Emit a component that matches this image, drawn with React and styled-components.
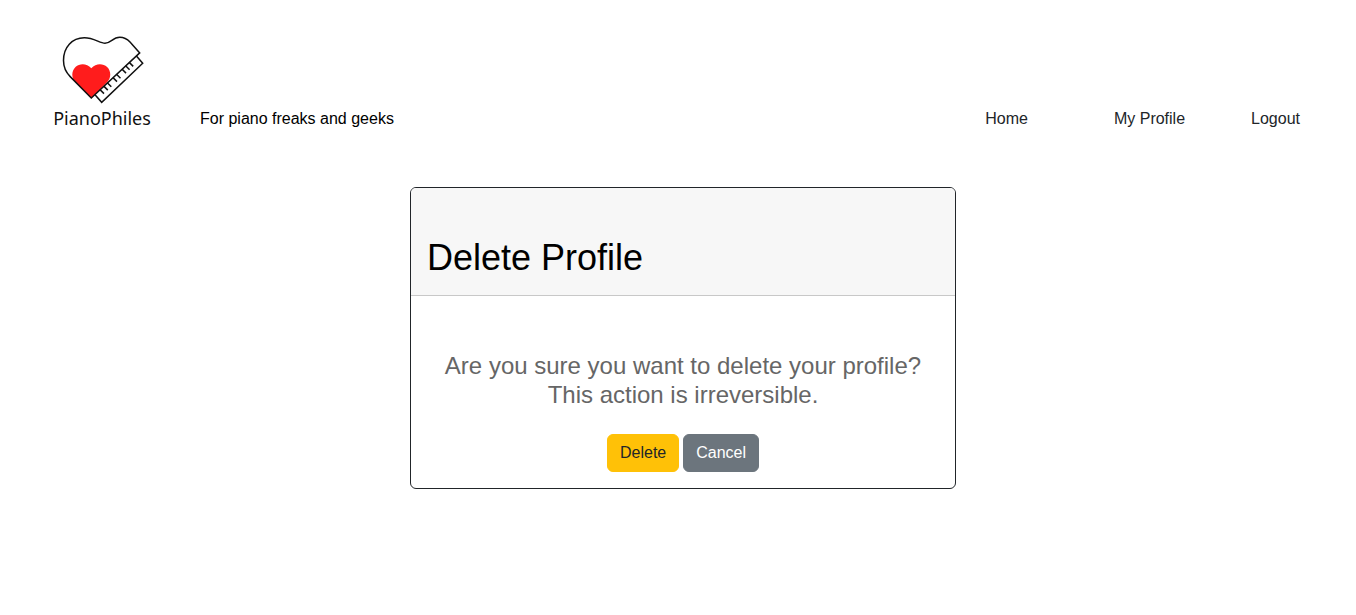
import React from "react";
import styled, { createGlobalStyle } from "styled-components";

const GlobalStyle = createGlobalStyle`
  *, *::before, *::after { box-sizing: border-box; }
  body {
    margin: 0;
    background: #fff;
    color: #212529;
    font: 16px/24px "Liberation Sans", Arial, sans-serif;
  }
  h1, p { margin: 0; font-weight: 400; }
`;

const Header = styled.header`
  display: flex;
  align-items: flex-end;
  padding: 30px 56px 0 53px;
`;

const Brand = styled.a`
  display: flex;
  flex-direction: column;
  align-items: center;
  width: 98px;
  color: #111;
  font: 18px/26px "Noto Sans", sans-serif;
  text-decoration: none;
`;

const Logo = styled.svg`
  display: block;
  width: 98px;
  height: 75px;
`;

const Tagline = styled.p`
  margin-left: 49px;
  color: #000;
`;

const Nav = styled.nav`
  display: flex;
  margin-left: auto;
`;

const NavLink = styled.a`
  margin-left: ${({ $gap }) => $gap}px;
  color: #212529;
  text-decoration: none;
`;

const Main = styled.main`
  display: flex;
  justify-content: center;
  padding: 56px 0 24px 10px;
`;

const Card = styled.section`
  width: 100%;
  max-width: 546px;
  border: 1px solid #212529;
  border-radius: 6px;
  overflow: hidden;
`;

const CardHeader = styled.div`
  padding: 48px 16px 16px;
  border-bottom: 1px solid #c8c8c8;
  background: #f7f7f7;
`;

const Title = styled.h1`
  color: #000;
  font-size: 36px;
  line-height: 43px;
`;

const CardBody = styled.div`
  padding: 55px 16px 16px;
  text-align: center;
`;

const Message = styled.p`
  margin-bottom: 25px;
  color: #666;
  font-size: 24px;
  line-height: 29px;
`;

const Actions = styled.div`
  display: flex;
  justify-content: center;
  gap: 4px;
`;

const Button = styled.button`
  padding: 6px 12px;
  border: 1px solid ${({ $fill }) => $fill};
  border-radius: 6px;
  background: ${({ $fill }) => $fill};
  color: ${({ $ink }) => $ink};
  font: inherit;
  cursor: pointer;
`;

const keys = [
  [100, 89.6], [103.8, 86.1], [107.3, 82.8], [113, 77.6],
  [116.5, 74.3], [122, 69.1], [125.6, 65.8], [129.2, 62.4],
];

function PianoLogo() {
  return (
    <Logo viewBox="53 30 98 75" fill="none" aria-hidden="true">
      <path
        fill="#ff1c1c"
        d="M91.3 98.5 75.4 82.2C71.3 78 71.3 71 75.5 67c4.2-3.7 11.3-3.7 15.8 1.2 4.5-4.9 11.6-4.9 15.8-1.2 4.2 4 4.2 10.8.2 15z"
      />
      <g stroke="#111" strokeWidth="1.5">
        <path d="M91.3 98 70.2 76.6C65.8 72.2 63.5 67 63.5 60.5 63.5 47 72 38 84.3 37.8c9.3-.1 15.6 5.4 20.7 5.4 5.5 0 7.8-5.9 14.8-5.9 4.4 0 7.4 1.8 10.2 4.8l9.7 10.8z" />
        <path d="m95 94.7 6.7 7.6 41-39-6.3-7.2" />
        {keys.map(([x, y]) => (
          <path key={x} d={`M${x} ${y}l4 4`} />
        ))}
      </g>
    </Logo>
  );
}

export default function App() {
  return (
    <>
      <GlobalStyle />
      <Header>
        <Brand href="#home">
          <PianoLogo />
          <span>PianoPhiles</span>
        </Brand>
        <Tagline>For piano freaks and geeks</Tagline>
        <Nav aria-label="Main">
          <NavLink href="#home" $gap={0}>Home</NavLink>
          <NavLink href="#profile" $gap={86}>My Profile</NavLink>
          <NavLink href="#logout" $gap={66}>Logout</NavLink>
        </Nav>
      </Header>
      <Main>
        <Card>
          <CardHeader>
            <Title>Delete Profile</Title>
          </CardHeader>
          <CardBody>
            <Message>
              Are you sure you want to delete your profile?
              <br />
              This action is irreversible.
            </Message>
            <Actions>
              <Button type="button" $fill="#ffc107" $ink="#212529">Delete</Button>
              <Button type="button" $fill="#6c757d" $ink="#fff">Cancel</Button>
            </Actions>
          </CardBody>
        </Card>
      </Main>
    </>
  );
}
